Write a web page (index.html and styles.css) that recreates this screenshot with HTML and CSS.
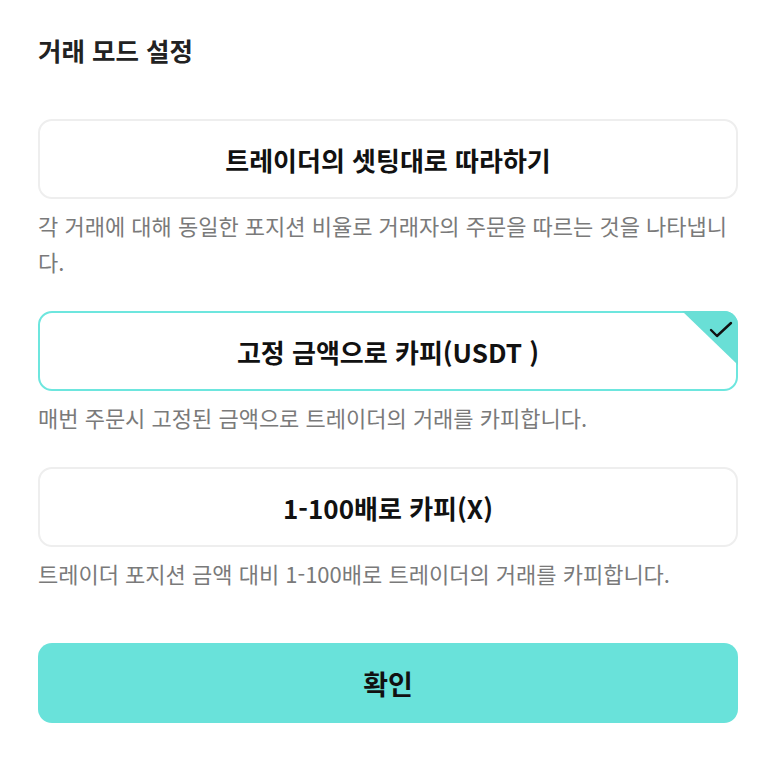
FILE: index.html
```html
<!DOCTYPE html>
<html lang="ko">
<head>
<meta charset="utf-8">
<link rel="stylesheet" href="styles.css">
</head>
<body>
<main class="sheet">
  <h1 class="title">거래 모드 설정</h1>
  <div class="options">
    <section class="option">
      <div class="card"><span>트레이더의 셋팅대로 따라하기</span></div>
      <p class="desc">각 거래에 대해 동일한 포지션 비율로 거래자의 주문을 따르는 것을 나타냅니다.</p>
    </section>
    <section class="option">
      <div class="card selected">
        <span>고정 금액으로 카피(USDT )</span>
        <div class="corner">
          <svg class="check" width="24" height="18" viewBox="0 0 24 18"><polyline points="2,9 8,15 22,2" fill="none" stroke="#111" stroke-width="2.4" stroke-linecap="round" stroke-linejoin="round"/></svg>
        </div>
      </div>
      <p class="desc">매번 주문시 고정된 금액으로 트레이더의 거래를 카피합니다.</p>
    </section>
    <section class="option">
      <div class="card"><span>1-100배로 카피(X)</span></div>
      <p class="desc">트레이더 포지션 금액 대비 1-100배로 트레이더의 거래를 카피합니다.</p>
    </section>
  </div>
  <button class="confirm">확인</button>
</main>
</body>
</html>
```
FILE: styles.css
```css
* { box-sizing: border-box; }
html, body { margin: 0; padding: 0; background: #fff; }
body { font-family: "Noto Sans CJK KR", "Noto Sans", sans-serif; color: #111; }
.sheet { width: 700px; margin-left: 38px; padding-top: 32px; }
.title { margin: 0; font-size: 25.5px; line-height: 36px; font-weight: 700; color: #222; }
.options { margin-top: 51px; display: flex; flex-direction: column; gap: 32px; }
.card {
  position: relative;
  height: 80px;
  border: 2px solid #eeeeee;
  border-radius: 14px;
  display: flex; align-items: center; justify-content: center;
  font-size: 26px; font-weight: 600; color: #111;
}
.card.selected { border-color: #6de6de; }
.corner {
  position: absolute; top: -2px; right: -2px;
  width: 56px; height: 54px;
  background: #69dfd6;
  clip-path: polygon(0 0, 100% 0, 100% 100%);
  border-top-right-radius: 14px;
}
.check { position: absolute; top: 10px; right: 5px; }
.desc { margin: 8px 0 0; font-size: 22px; line-height: 36px; color: #7a7a7a; }
.confirm {
  display: block; width: 100%; height: 80px; margin-top: 52px;
  border: none; border-radius: 14px; background: #69e2da;
  font-family: inherit; font-size: 27px; font-weight: 600; color: #111;
}
```
